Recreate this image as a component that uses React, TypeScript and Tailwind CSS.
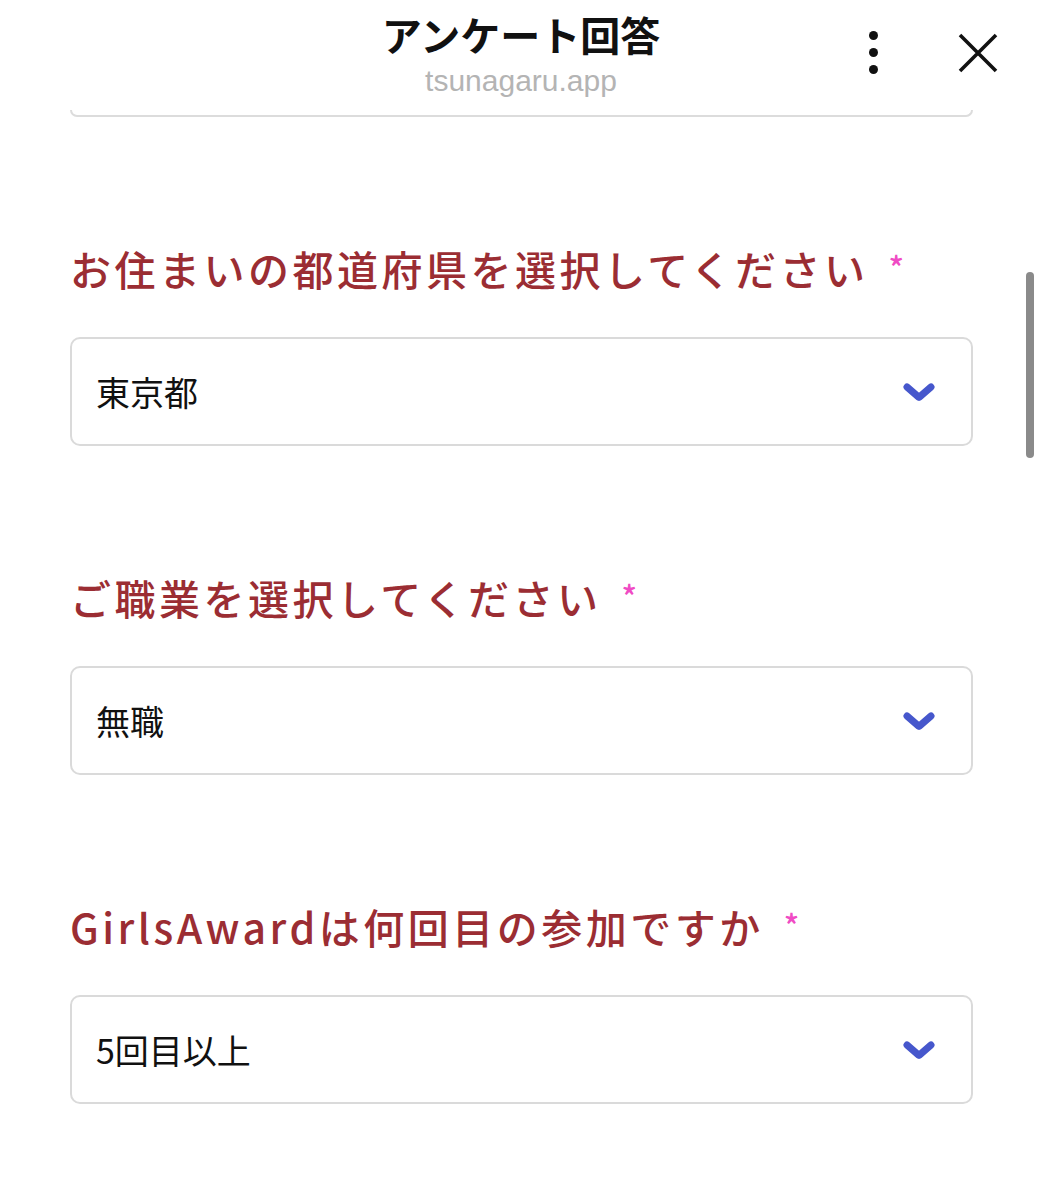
import React from "react";

const jp = { fontFamily: '"Noto Sans CJK JP", "Noto Sans", sans-serif' };

const Chevron = () => (
  <svg width="32" height="22" viewBox="0 0 32 22" className="shrink-0">
    <path d="M4 6 L15.5 16" stroke="#4657cc" strokeWidth="7" strokeLinecap="round" />
    <path d="M16.5 16 L28 6" stroke="#4657cc" strokeWidth="7" strokeLinecap="round" />
  </svg>
);

type Field = { label: string; value: string };

const fields: Field[] = [
  { label: "お住まいの都道府県を選択してください", value: "東京都" },
  { label: "ご職業を選択してください", value: "無職" },
  { label: "GirlsAwardは何回目の参加ですか", value: "5回目以上" },
];

export default function App() {
  return (
    <div className="relative w-[1042px] h-[1199px] bg-white overflow-hidden">
      {/* Header */}
      <div className="grid grid-cols-[1fr_auto_1fr] h-[110px] bg-white">
        <div />
        <div className="flex flex-col items-center pt-[11px]">
          <div className="text-[40px] leading-[46px] font-bold text-[#111]" style={jp}>
            アンケート回答
          </div>
          <div
            className="text-[30px] leading-[34px] mt-[7px] text-[#b4b4b4]"
            style={{ fontFamily: '"Liberation Sans", Arial, sans-serif' }}
          >
            tsunagaru.app
          </div>
        </div>
        <div className="flex items-start justify-end pr-[44px] pt-[31px]">
          <div className="flex flex-col gap-[8px] mr-[80px]">
            <span className="block w-[9px] h-[9px] rounded-full bg-[#111]" />
            <span className="block w-[9px] h-[9px] rounded-full bg-[#111]" />
            <span className="block w-[9px] h-[9px] rounded-full bg-[#111]" />
          </div>
          <svg width="40" height="40" viewBox="0 0 40 40" className="mt-[2px]">
            <path d="M2 2 L38 38 M38 2 L2 38" stroke="#111" strokeWidth="3.6" />
          </svg>
        </div>
      </div>

      {/* Form */}
      <div className="pl-[70px] pr-[69px]" style={jp}>
        <div className="h-[7px] border-x-2 border-b-2 border-[#dcdcdc] rounded-b-[10px]" />

        {fields.map((f) => (
          <div key={f.label} className="mt-[130px]">
            <div className="flex items-start h-[46px] -translate-y-[2px]">
              <span className="text-[41px] leading-[46px] font-medium tracking-[3.5px] text-[#9b2d33]">
                {f.label}
              </span>
              <span className="text-[32px] leading-[30px] font-medium text-[#f04bc4] ml-[20px] mt-[6px]">
                *
              </span>
            </div>
            <div className="mt-[44px] h-[109px] border-2 border-[#dadada] rounded-[10px] flex items-center justify-between pl-[24px] pr-[36px]">
              <span className="text-[34px] text-[#111]">{f.value}</span>
              <Chevron />
            </div>
          </div>
        ))}
      </div>

      {/* Scrollbar */}
      <div className="absolute left-[1026px] top-[272px] w-[8px] h-[186px] rounded-full bg-[#8a8a8a]" />
    </div>
  );
}
